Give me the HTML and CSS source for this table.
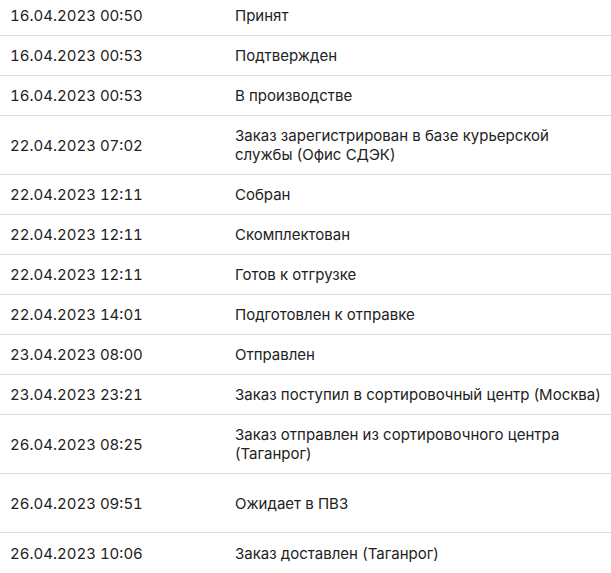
FILE: index.html
```html
<!DOCTYPE html>
<html lang="ru"><head><meta charset="utf-8"><link rel="stylesheet" href="styles.css"></head>
<body>
<div class="history">
  <div class="history__row"><div class="history__date">16.04.2023 00:50</div><div class="history__status">Принят</div></div>
  <div class="history__row"><div class="history__date">16.04.2023 00:53</div><div class="history__status">Подтвержден</div></div>
  <div class="history__row"><div class="history__date">16.04.2023 00:53</div><div class="history__status">В производстве</div></div>
  <div class="history__row"><div class="history__date">22.04.2023 07:02</div><div class="history__status">Заказ зарегистрирован в базе курьерской службы (Офис СДЭК)</div></div>
  <div class="history__row"><div class="history__date">22.04.2023 12:11</div><div class="history__status">Собран</div></div>
  <div class="history__row"><div class="history__date">22.04.2023 12:11</div><div class="history__status">Скомплектован</div></div>
  <div class="history__row"><div class="history__date">22.04.2023 12:11</div><div class="history__status">Готов к отгрузке</div></div>
  <div class="history__row"><div class="history__date">22.04.2023 14:01</div><div class="history__status">Подготовлен к отправке</div></div>
  <div class="history__row"><div class="history__date">23.04.2023 08:00</div><div class="history__status">Отправлен</div></div>
  <div class="history__row"><div class="history__date">23.04.2023 23:21</div><div class="history__status">Заказ поступил в сортировочный центр (Москва)</div></div>
  <div class="history__row"><div class="history__date">26.04.2023 08:25</div><div class="history__status">Заказ отправлен из сортировочного центра (Таганрог)</div></div>
  <div class="history__row history__row--tall"><div class="history__date">26.04.2023 09:51</div><div class="history__status">Ожидает в ПВЗ</div></div>
  <div class="history__row"><div class="history__date">26.04.2023 10:06</div><div class="history__status">Заказ доставлен (Таганрог)</div></div>
</div>
</body></html>
```
FILE: styles.css
```css
html,body{margin:0;padding:0;background:#fff}
body{font-family:Inter,"Noto Sans",sans-serif;font-size:15px;line-height:19px;color:#222;}
.history{margin-top:-4px}
.history__row{
  display:grid;
  grid-template-columns:225px 1fr;
  align-items:center;
  box-sizing:border-box;
  min-height:40px;
  padding:10px 6px 10px 10px;
  border-bottom:1px solid #dddddd;
}
.history__row--tall{min-height:59px}
.history__row:last-child{border-bottom:none}
.history__date{font-variant-numeric:tabular-nums}
```
